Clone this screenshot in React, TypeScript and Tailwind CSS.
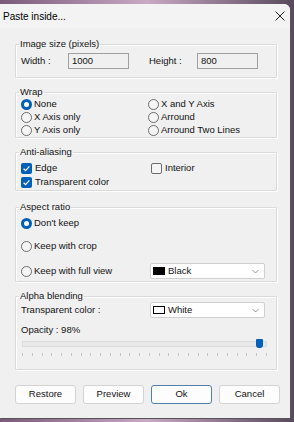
import React from 'react'

const Radio = ({ checked, label }: { checked?: boolean; label: string }) => (
  <label className="flex items-center gap-[2px] h-[13px]">
    {checked ? (
      <span className="w-[11px] h-[11px] rounded-full bg-[#005fb8] flex items-center justify-center">
        <span className="w-[5px] h-[5px] rounded-full bg-white" />
      </span>
    ) : (
      <span className="w-[11px] h-[11px] rounded-full border border-[#6b6b6b] bg-[#f5f5f5]" />
    )}
    <span>{label}</span>
  </label>
)

const Check = ({ checked, label }: { checked?: boolean; label: string }) => (
  <label className="flex items-center gap-[3px] h-[14px]">
    {checked ? (
      <span className="w-[11px] h-[11px] rounded-[2px] bg-[#005fb8] flex items-center justify-center">
        <svg width="9" height="9" viewBox="0 0 9 9">
          <path d="M1.6 4.7 L3.6 6.6 L7.4 2.3" stroke="white" strokeWidth="1.2" fill="none" />
        </svg>
      </span>
    ) : (
      <span className="w-[11px] h-[11px] rounded-[2px] border border-[#6b6b6b] bg-[#f5f5f5]" />
    )}
    <span>{label}</span>
  </label>
)

const Group = ({ title, className, children }: { title: string; className?: string; children: React.ReactNode }) => (
  <fieldset
    className={`border border-[#dadada] shadow-[inset_1px_1px_0_#ffffff,1px_1px_0_#ffffff] rounded-[1px] px-[5px] ${className ?? ''}`}
  >
    <legend className="px-[1px] ml-[-2px] leading-[12px]">{title}</legend>
    {children}
  </fieldset>
)

const Select = ({ swatch, label }: { swatch: string; label: string }) => (
  <div className="w-[115px] h-[16px] bg-white border border-[#cfcfcf] rounded-[2px] flex items-center pl-[2px] pr-[5px]">
    <span className={`w-[12px] h-[8px] border border-black ${swatch}`} />
    <span className="ml-[3px] flex-1">{label}</span>
    <svg width="7" height="5" viewBox="0 0 7 5">
      <path d="M0.5 1 L3.5 4 L6.5 1" stroke="#8a8a8a" strokeWidth="0.9" fill="none" />
    </svg>
  </div>
)

const Btn = ({ label, primary }: { label: string; primary?: boolean }) => (
  <button
    className={`w-[61px] h-[19px] rounded-[3px] bg-[#fdfdfd] ${
      primary ? 'border border-[#4f7fab]' : 'border border-[#d3d3d3]'
    }`}
  >
    {label}
  </button>
)

export default function App() {
  return (
    <div
      className="w-[294px] h-[422px] overflow-hidden bg-gradient-to-r from-[#7a5a78] via-[#c9a9c6] to-[#5a4a5e] pt-[4px] text-[9.5px] text-[#111]"
      style={{ fontFamily: '"Liberation Sans", Arial, sans-serif' }}
    >
      <div className="w-[290px] h-[414px] bg-[#f0f0f0] rounded-tr-[6px] flex flex-col shadow-[1px_1px_0_#555]">
        {/* title bar */}
        <div className="h-[24px] bg-[#f3f3f3] rounded-tr-[6px] flex items-center justify-between pl-[3px] pr-[5px] text-[10px] text-black">
          <span>Paste inside...</span>
          <svg width="10" height="10" viewBox="0 0 10 10">
            <path d="M0.5 0.5 L9.5 9.5 M9.5 0.5 L0.5 9.5" stroke="#222" strokeWidth="1" />
          </svg>
        </div>

        <div className="pl-[15px] pr-[13px] pt-[10px] flex flex-col gap-[8px]">
          <Group title="Image size (pixels)" className="h-[40px]">
            <div className="flex items-center mt-[3px]">
              <span className="w-[47px]">Width :</span>
              <div className="w-[61px] h-[16px] border border-[#a0a0a0] bg-[#f0f0f0] pl-[3px] leading-[14px]">
                1000
              </div>
              <span className="w-[48px] ml-[20px]">Height :</span>
              <div className="w-[61px] h-[16px] border border-[#a0a0a0] bg-[#f0f0f0] pl-[3px] leading-[14px]">
                800
              </div>
            </div>
          </Group>

          <Group title="Wrap" className="h-[52px]">
            <div className="grid grid-cols-[127px_1fr]">
              <Radio checked label="None" />
              <Radio label="X and Y Axis" />
              <Radio label="X Axis only" />
              <Radio label="Arround" />
              <Radio label="Y Axis only" />
              <Radio label="Arround Two Lines" />
            </div>
          </Group>

          <Group title="Anti-aliasing" className="h-[45px]">
            <div className="grid grid-cols-[130px_1fr] mt-[3px]">
              <Check checked label="Edge" />
              <Check label="Interior" />
              <Check checked label="Transparent color" />
            </div>
          </Group>

          <Group title="Aspect ratio" className="h-[81px] mt-[2px]">
            <div className="flex flex-col gap-[10px] mt-[4px]">
              <Radio checked label="Don't keep" />
              <Radio label="Keep with crop" />
              <div className="flex items-center justify-between pr-[6px]">
                <Radio label="Keep with full view" />
                <Select swatch="bg-black" label="Black" />
              </div>
            </div>
          </Group>

          <Group title="Alpha blending" className="h-[80px]">
            <div className="flex items-center justify-between pr-[6px]">
              <span>Transparent color :</span>
              <Select swatch="bg-white" label="White" />
            </div>
            <div className="mt-[6px] leading-[12px]">Opacity : 98%</div>
            <div className="relative mt-[3px] ml-[1px] mr-[4px] h-[9px]">
              <div className="absolute left-0 right-0 top-[2px] h-[6px] bg-[#e9e9e9] border border-[#dadada]" />
              <div className="absolute right-[4px] top-0 w-[7px] h-[9px] bg-[#005fb8] rounded-[1px] rounded-b-[3px]" />
            </div>
            <div className="flex justify-between ml-[1px] mr-[4px] mt-[5px]">
              {Array.from({ length: 26 }).map((_, i) => (
                <span key={i} className="w-[1px] h-[3px] bg-[#c4c4c4]" />
              ))}
            </div>
          </Group>
        </div>

        <div className="flex gap-[7px] pl-[15px] mt-[15px]">
          <Btn label="Restore" />
          <Btn label="Preview" />
          <Btn label="Ok" primary />
          <Btn label="Cancel" />
        </div>
      </div>
    </div>
  )
}
